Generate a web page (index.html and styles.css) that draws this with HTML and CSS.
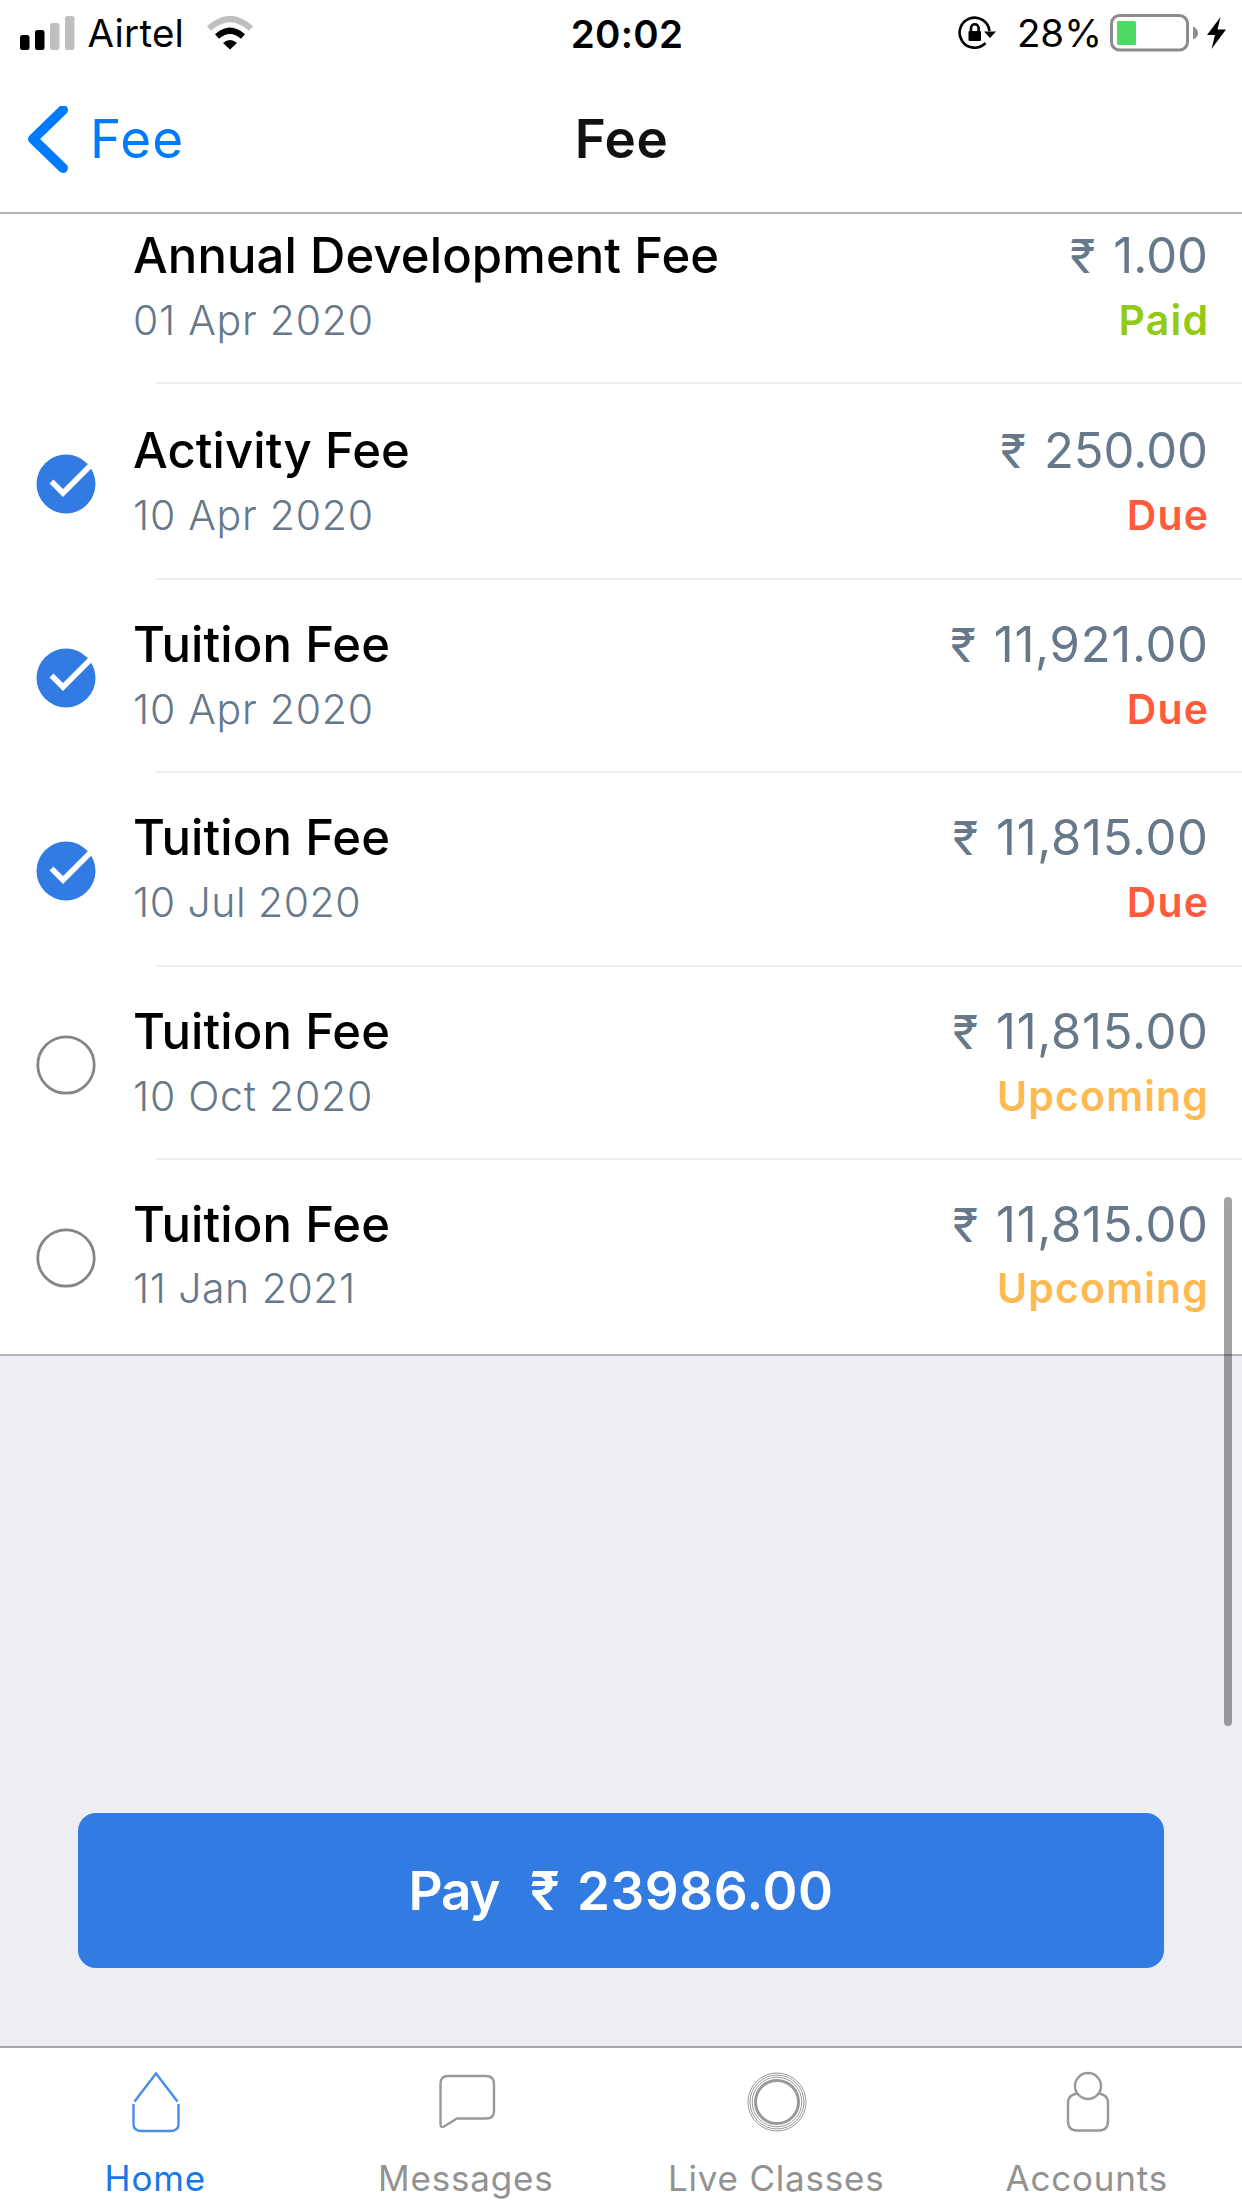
FILE: index.html
```html
<!DOCTYPE html>
<html lang="en">
<head>
<meta charset="utf-8">
<title>Fee</title>
<link rel="stylesheet" href="styles.css">
</head>
<body>
<div class="app">
  <header class="header">
    <div class="status-bar">
      <div class="status-left">
        <svg class="signal" width="55" height="34" viewBox="0 0 55 34"><rect x="0" y="19" width="9.5" height="15" rx="2.5"/><rect x="15" y="14" width="9.5" height="20" rx="2.5"/><rect class="dim" x="30" y="7" width="9.5" height="27" rx="2.5"/><rect class="dim" x="45" y="0" width="9.5" height="34" rx="2.5"/></svg>
        <span class="carrier">Airtel</span>
        <svg class="wifi" width="48" height="34" viewBox="0 0 48 34"><path class="wifi-dim" d="M3 12.500Q24-6.500 45 12.500"/><path class="wifi-arc" d="M11 20.500Q24 9 37 20.500"/><path d="M17 27Q24 21 31 27L24 33.500Z"/></svg>
      </div>
      <span class="time">20:02</span>
      <div class="status-right">
        <svg class="lock" width="38" height="34" viewBox="0 0 38 34"><path class="ring" d="M31.500 15A15 15 0 1 0 27.500 27"/><path d="M26 15.500H38L32 22Z"/><rect x="10.500" y="15" width="12.500" height="10" rx="1"/><path class="shackle" d="M13 16V12a3.800 3.800 0 0 1 7.600 0V16"/></svg>
        <span class="percent">28%</span>
        <svg class="battery" width="90" height="38" viewBox="0 0 90 38"><rect class="case" x="1.500" y="1.500" width="76" height="34.500" rx="8"/><rect class="charge" x="7" y="7" width="19" height="24" rx="1.500"/><path class="cap" d="M83 12.500Q88 15 88 19T83 25.500Z"/></svg>
        <svg class="bolt" width="20" height="32" viewBox="0 0 20 32"><path d="M13.500 0L0 18H8L4.500 32L19 12.500H10.500Z"/></svg>
      </div>
    </div>
    <nav class="nav">
      <a class="back"><svg width="40" height="68" viewBox="0 0 40 68"><path d="M35 4L5 33L35 62"/></svg><span class="back-label">Fee</span></a>
      <h1 class="nav-title">Fee</h1>
    </nav>
  </header>

  <main class="content">
    <ul class="fees">
      <li class="fee first">
        <div class="mark"></div>
        <div class="info"><span class="name">Annual Development Fee</span><span class="date">01 Apr 2020</span></div>
        <div class="sum"><span class="amount"><span class="rs">₹</span><span class="num">1.00</span></span><span class="state paid">Paid</span></div>
      </li>
      <li class="fee second">
        <div class="mark"><svg width="60" height="60" viewBox="0 0 60 60"><circle class="on" cx="30" cy="30" r="29.500"/><path class="tick" d="M15.500 27.500L27 39L55.500 10.500"/></svg></div>
        <div class="info"><span class="name">Activity Fee</span><span class="date">10 Apr 2020</span></div>
        <div class="sum"><span class="amount"><span class="rs">₹</span><span class="num">250.00</span></span><span class="state due">Due</span></div>
      </li>
      <li class="fee">
        <div class="mark"><svg width="60" height="60" viewBox="0 0 60 60"><circle class="on" cx="30" cy="30" r="29.500"/><path class="tick" d="M15.500 27.500L27 39L55.500 10.500"/></svg></div>
        <div class="info"><span class="name">Tuition Fee</span><span class="date">10 Apr 2020</span></div>
        <div class="sum"><span class="amount"><span class="rs">₹</span><span class="num wide">11,921.00</span></span><span class="state due">Due</span></div>
      </li>
      <li class="fee">
        <div class="mark"><svg width="60" height="60" viewBox="0 0 60 60"><circle class="on" cx="30" cy="30" r="29.500"/><path class="tick" d="M15.500 27.500L27 39L55.500 10.500"/></svg></div>
        <div class="info"><span class="name">Tuition Fee</span><span class="date short">10 Jul 2020</span></div>
        <div class="sum"><span class="amount"><span class="rs">₹</span><span class="num wide">11,815.00</span></span><span class="state due">Due</span></div>
      </li>
      <li class="fee">
        <div class="mark"><svg width="60" height="60" viewBox="0 0 60 60"><circle class="off" cx="30" cy="30" r="28.200"/></svg></div>
        <div class="info"><span class="name">Tuition Fee</span><span class="date">10 Oct 2020</span></div>
        <div class="sum"><span class="amount"><span class="rs">₹</span><span class="num wide">11,815.00</span></span><span class="state upcoming">Upcoming</span></div>
      </li>
      <li class="fee last">
        <div class="mark"><svg width="60" height="60" viewBox="0 0 60 60"><circle class="off" cx="30" cy="30" r="28.200"/></svg></div>
        <div class="info"><span class="name">Tuition Fee</span><span class="date short">11 Jan 2021</span></div>
        <div class="sum"><span class="amount"><span class="rs">₹</span><span class="num wide">11,815.00</span></span><span class="state upcoming">Upcoming</span></div>
      </li>
    </ul>
    <button class="pay"><span class="pay-word">Pay</span><span class="pay-rs">₹</span><span class="pay-num">23986.00</span></button>
    <div class="scrollbar"></div>
  </main>

  <footer class="tabs">
    <a class="tab active"><svg width="62" height="62" viewBox="0 0 62 62"><path d="M9.500 30.500L31 2.500L52.500 30.500M8.500 33V53Q8.500 60 17 60H45Q53.500 60 53.500 53V33"/></svg><span class="tab-label">Home</span></a>
    <a class="tab"><svg width="62" height="62" viewBox="0 0 62 62"><path d="M5.500 13Q5.500 5 13 5H51Q59 5 59 13V40Q59 47.500 51 47.500H22L9 55.500Q5.500 57.500 5.500 53Z"/></svg><span class="tab-label">Messages</span></a>
    <a class="tab"><svg width="62" height="62" viewBox="0 0 62 62"><circle class="hair" cx="31" cy="31" r="29"/><circle class="hair" cx="31" cy="31" r="27"/><circle class="hair" cx="31" cy="31" r="24.800"/><circle class="bold" cx="31" cy="31" r="21.500"/></svg><span class="tab-label">Live Classes</span></a>
    <a class="tab"><svg width="62" height="62" viewBox="0 0 62 62"><circle cx="32" cy="15" r="13"/><path d="M21 22.500Q12 24 12 32V50Q12 59.500 21 59.500H43Q52 59.500 52 50V32Q52 24 43 22.500"/></svg><span class="tab-label">Accounts</span></a>
  </footer>
</div>
</body>
</html>
```
FILE: styles.css
```css
* { box-sizing: border-box; }

body {
  margin: 0;
  background: #fff;
  font-family: Inter, "Liberation Sans", sans-serif;
  color: #000;
}

.app {
  display: flex;
  flex-direction: column;
  width: 1242px;
  height: 2208px;
  overflow: hidden;
}

/* status bar and navigation */
.header { height: 214px; border-bottom: 2px solid #b4b4b6; flex: none; }

.status-bar {
  display: grid;
  grid-template-columns: 1fr auto 1fr;
  height: 66px;
  line-height: 68px;
  font-size: 38.5px;
}
.status-left, .status-right { display: flex; align-items: center; height: 66px; }
.status-left { padding-left: 20px; }
.status-right { justify-content: flex-end; padding-right: 15px; }
.carrier { margin-left: 12.5px; letter-spacing: .25px; }
.time { padding-left: 12px; font-weight: 600; letter-spacing: .3px; }
.wifi { margin-left: 21.5px; }
.signal .dim { fill: #bfbfbf; }
.wifi-dim, .wifi-arc { fill: none; stroke: #bfbfbf; stroke-width: 6; }
.wifi-arc { stroke: #000; }
.ring, .shackle { fill: none; stroke: #000; stroke-width: 2.6; }
.percent { margin-left: 21px; }
.battery { margin-left: 8px; }
.case { fill: none; stroke: #8c8c8c; stroke-width: 3; }
.charge { fill: #4cd964; }
.cap { fill: #8c8c8c; }
.bolt { margin-left: 7px; }

.nav {
  display: grid;
  grid-template-columns: 1fr auto 1fr;
  height: 146px;
  line-height: 147px;
  font-size: 53px;
}
.back { display: flex; align-items: center; padding-left: 28px; color: #007aff; }
.back svg { fill: none; stroke: #007aff; stroke-width: 10; stroke-linecap: round; stroke-linejoin: round; }
.back-label { margin-left: 22px; letter-spacing: 1.1px; }
.nav-title { margin: 0; padding-left: 1px; font-size: 53px; font-weight: 600; letter-spacing: .5px; color: #111; }

/* fee list */
.content {
  position: relative;
  flex: 1;
  display: flex;
  flex-direction: column;
  background: #eeedf3;
}
.fees {
  margin: 0;
  padding: 0;
  list-style: none;
  height: 1142px;
  background: #fff;
  border-bottom: 2px solid #b4b4b6;
}
.fee {
  position: relative;
  display: grid;
  grid-template-columns: 133px 1fr auto;
  height: 193.67px;
  padding: 36px 34px 0 0;
}
.fee.first { height: 168.5px; padding-top: 12px; }
.fee.second { height: 196px; padding-top: 38.5px; }
.fee + .fee::before {
  content: "";
  position: absolute;
  left: 156px;
  right: 0;
  top: -1px;
  height: 2px;
  background: #ececf1;
}
.mark { padding: 33px 0 0 36px; }
.on { fill: #317be2; }
.off { fill: none; stroke: #858585; stroke-width: 2.8; }
.tick { fill: none; stroke: #fff; stroke-width: 5.5; }
.info, .sum { display: flex; flex-direction: column; gap: 4px; line-height: 60px; }
.sum { align-items: flex-end; }
.name { font-size: 49px; font-weight: 500; letter-spacing: .1px; }
.date { font-size: 41px; font-weight: 300; letter-spacing: .75px; color: #66788a; }
.date.short { letter-spacing: .5px; }
.amount { display: flex; font-size: 49px; color: #66788a; }
.rs { margin-right: 18px; font-size: 47px; }
.wide { margin-right: -.7px; letter-spacing: .7px; }
.state { margin-right: -1.15px; font-size: 41px; font-weight: 600; letter-spacing: 1.15px; }
.last .info, .last .sum { gap: 3px; }
.paid { color: #92ca14; }
.due { color: #ff5a3c; }
.upcoming { color: #ffb951; }

.scrollbar {
  position: absolute;
  left: 1224px;
  top: 983px;
  width: 8px;
  height: 529px;
  border-radius: 4px;
  background: rgba(0, 0, 0, .36);
}

.pay {
  display: flex;
  justify-content: center;
  align-items: center;
  margin: 457px 78px 0;
  height: 155px;
  border: 0;
  border-radius: 18px;
  background: #317be2;
  color: #fff;
  font: 600 53px Inter, "Liberation Sans", sans-serif;
}
.pay-word { letter-spacing: -1.3px; }
.pay-rs { margin: 0 17px 0 31px; }
.pay-num { letter-spacing: .55px; }

/* tab bar */
.tabs {
  display: grid;
  grid-template-columns: repeat(4, 1fr);
  height: 162px;
  padding: 23px 0 0 0;
  border-top: 2px solid #a6a6a8;
  background: #fff;
  flex: none;
}
.tab { display: flex; flex-direction: column; align-items: center; color: #929292; font-size: 35px; }
.tab svg { margin-left: 1px; fill: none; stroke: #999; stroke-width: 2.4; }
.tab .hair { stroke-width: 1; }
.tab .bold { stroke-width: 3; }
.tab-label { margin-top: 23px; line-height: 44px; letter-spacing: .8px; }
.tab.active { color: #1877e8; }
.tab.active svg { stroke: #478dea; }
```
